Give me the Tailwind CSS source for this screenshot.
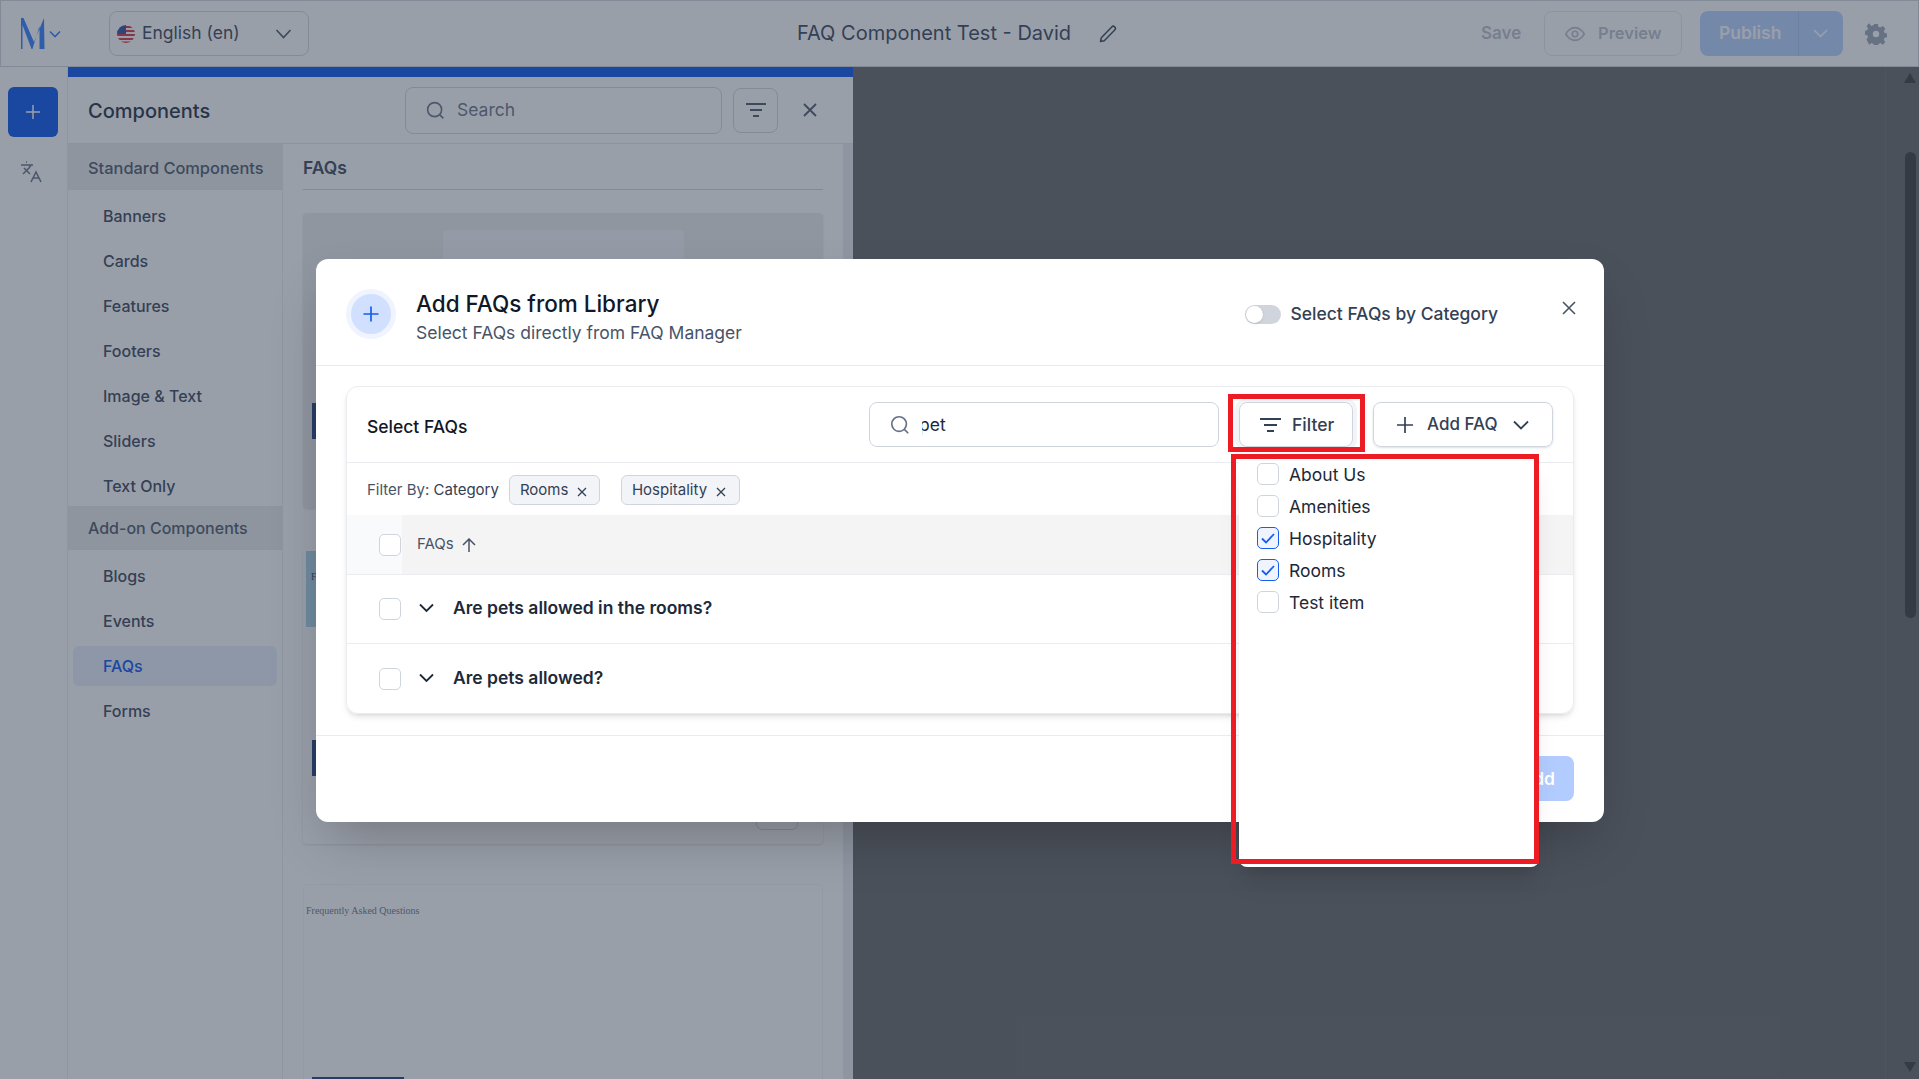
<!DOCTYPE html>
<html lang="en">
<head>
  <meta charset="UTF-8" />
  <title>FAQ Component Test - David</title>
  <script src="https://cdn.jsdelivr.net/npm/@tailwindcss/browser@4"></script>
</head>
<body class="[font-family:Inter,sans-serif]">
<div class="relative w-[1919px] h-[1079px] overflow-hidden bg-white flex flex-col text-[#344054]">

  <!-- top bar -->
  <header class="h-[67px] shrink-0 flex items-center border border-[#d0d5dd] bg-white relative">
    <svg class="ml-[19px] w-[25px] h-[32px] text-[#2a7aff]" viewBox="0 0 25 32" fill="currentColor"><polygon points="1,0 3.5,0 14,24 24,0 24.5,31 19.5,31 19.5,8 12.5,31 11.5,31 2.5,7 2.5,31 1,31"/></svg>
    <svg class="ml-[4px] w-[12px] h-[8px] text-[#2a7aff]" viewBox="0 0 12 8" fill="none" stroke="currentColor" stroke-width="1.6"><path d="m1 1.5 5 5 5-5"/></svg>
    <div class="ml-[48px] w-[200px] h-[45px] rounded-lg border border-[#d0d5dd] flex items-center pl-[7px] pr-[16px]">
      <svg class="w-[18px] h-[18px]" viewBox="0 0 18 18">
        <defs><clipPath id="flagClip"><circle cx="9" cy="9" r="9"/></clipPath></defs>
        <g clip-path="url(#flagClip)">
          <rect width="18" height="18" fill="#fff"/>
          <rect y="1" width="18" height="2" fill="#d92d3a"/><rect y="5" width="18" height="2" fill="#d92d3a"/><rect y="9" width="18" height="2" fill="#d92d3a"/><rect y="13" width="18" height="2" fill="#d92d3a"/><rect y="16.5" width="18" height="2" fill="#d92d3a"/>
          <rect width="9" height="9" fill="#2a4aa0"/>
        </g>
      </svg>
      <span class="ml-[7px] text-[17.5px]">English (en)</span>
      <svg class="ml-auto w-[17px] h-[10px] text-[#475467]" viewBox="0 0 17 10" fill="none" stroke="currentColor" stroke-width="1.7"><path d="m1.5 1 7 7.5 7-7.5"/></svg>
    </div>
    <div class="ml-[488px] flex items-center text-[20px] text-[#344054]">
      <span class="w-[277px] -mt-[1px] whitespace-nowrap">FAQ Component Test - David</span>
      <svg class="ml-[24px] w-[20px] h-[20px]" viewBox="0 0 24 24" fill="none" stroke="currentColor" stroke-width="1.8" stroke-linejoin="round"><path d="M16.5 3.5a2.5 2.5 0 0 1 3.6 3.6L7.5 20 3 21l1-4.5z"/></svg>
    </div>
    <span class="ml-[363px] text-[17px] font-semibold text-[#98a2b3]/70 w-[41px]">Save</span>
    <div class="ml-[22px] w-[138px] h-[45px] rounded-lg border border-[#e4e7ec] flex items-center pl-[19px] text-[#98a2b3]/70 text-[16.5px] font-semibold">
      <svg class="w-[22px] h-[22px]" viewBox="0 0 24 24" fill="none" stroke="currentColor" stroke-width="1.8"><path d="M2 12s3.6-7 10-7 10 7 10 7-3.6 7-10 7-10-7-10-7z"/><circle cx="12" cy="12" r="3"/></svg>
      <span class="ml-[12px]">Preview</span>
    </div>
    <div class="ml-[18px] w-[143px] h-[45px] rounded-lg bg-[#b4d0ff] flex items-center text-white text-[17.5px] font-semibold">
      <span class="w-[99px] h-full flex items-center pl-[19px] border-r border-[#a5c2f5]">Publish</span>
      <svg class="ml-[14px] w-[15px] h-[9px]" viewBox="0 0 15 9" fill="none" stroke="currentColor" stroke-width="1.7"><path d="m1 1 6.5 6.5L14 1"/></svg>
    </div>
    <svg class="ml-[22px] w-[22px] h-[22px] text-[#98a2b3]" viewBox="0 0 24 24" fill="currentColor"><path fill-rule="evenodd" d="M10 1h4l.6 3 2.2.9 2.6-1.7 2.8 2.8-1.7 2.6.9 2.2 3 .6v4l-3 .6-.9 2.2 1.7 2.6-2.8 2.8-2.6-1.7-2.2.9-.6 3h-4l-.6-3-2.2-.9-2.6 1.7L1.6 18l1.7-2.6-.9-2.2-3-.6v-4l3-.6.9-2.2L1.6 3.2 4.4.4 7 3.3l2.2-.9zM12 8.5a3.5 3.5 0 1 0 0 7 3.5 3.5 0 0 0 0-7z"/></svg>
  </header>

  <div class="flex-1 flex min-h-0">
    <!-- icon rail -->
    <nav class="w-[68px] shrink-0 bg-white border-r border-[#eaecf0] flex flex-col items-start pl-[8px] pt-[20px]">
      <div class="w-[50px] h-[50px] rounded-md bg-[#004eec] flex items-center justify-center text-white">
        <svg class="w-[18px] h-[18px]" viewBox="0 0 18 18" fill="none" stroke="currentColor" stroke-width="1.5"><path d="M9 2v14M2 9h14"/></svg>
      </div>
      <svg class="ml-[11px] mt-[23px] w-[24px] h-[24px] text-[#667085]" viewBox="0 0 24 24" fill="none" stroke="currentColor" stroke-width="1.6"><path d="m5 8 6 6M4 14l6-6 2-3M2 5h12M7 2h1M22 22l-5-10-5 10M14 18h6"/></svg>
    </nav>

    <!-- components panel -->
    <aside class="w-[785px] shrink-0 flex flex-col min-h-0">
      <div class="h-[10px] shrink-0 bg-[#004eec]"></div>
      <div class="h-[67px] shrink-0 flex items-center pl-[20px] border-b border-[#e4e7ec]">
        <span class="w-[317px] pt-[2px] text-xl font-medium text-[#1d2939]">Components</span>
        <div class="w-[317px] h-[47px] rounded-lg border border-[#d0d5dd] flex items-center pl-[19px] text-[17.5px] text-[#667085]">
          <svg class="w-[21px] h-[21px]" viewBox="0 0 24 24" fill="none" stroke="currentColor" stroke-width="1.8"><circle cx="11" cy="11" r="8"/><path d="m21 21-4.3-4.3"/></svg>
          <span class="ml-[11px] pt-[1px]">Search</span>
        </div>
        <div class="ml-[11px] w-[45px] h-[45px] rounded-lg border border-[#d0d5dd] flex items-center justify-center text-[#475467]">
          <svg class="w-[22px] h-[16px]" viewBox="0 0 22 16" fill="none" stroke="currentColor" stroke-width="2"><path d="M1 2h20M5 8h12M8 14h6"/></svg>
        </div>
        <svg class="ml-[24px] w-[16px] h-[16px] text-[#475467]" viewBox="0 0 16 16" fill="none" stroke="currentColor" stroke-width="1.8"><path d="m2 2 12 12M14 2 2 14"/></svg>
      </div>
      <div class="flex-1 flex min-h-0">
        <div class="w-[215px] shrink-0 border-r border-[#eaecf0] text-base font-medium">
          <div class="h-[46px] bg-[#eaeaea] flex items-center pl-[20px] pt-[2px] text-[16.4px] text-[#475467] whitespace-nowrap">Standard Components</div>
          <ul class="pt-[6px] space-y-[5px] text-[#344054]">
            <li class="mx-[5px] h-[40px] flex items-center pl-[30px]">Banners</li>
            <li class="mx-[5px] h-[40px] flex items-center pl-[30px]">Cards</li>
            <li class="mx-[5px] h-[40px] flex items-center pl-[30px]">Features</li>
            <li class="mx-[5px] h-[40px] flex items-center pl-[30px]">Footers</li>
            <li class="mx-[5px] h-[40px] flex items-center pl-[30px]">Image &amp; Text</li>
            <li class="mx-[5px] h-[40px] flex items-center pl-[30px]">Sliders</li>
            <li class="mx-[5px] h-[40px] flex items-center pl-[30px]">Text Only</li>
          </ul>
          <div class="h-[44px] bg-[#eaeaea] flex items-center pl-[20px] text-[#475467]">Add-on Components</div>
          <ul class="pt-[6px] space-y-[5px] text-[#344054]">
            <li class="mx-[5px] h-[40px] flex items-center pl-[30px]">Blogs</li>
            <li class="mx-[5px] h-[40px] flex items-center pl-[30px]">Events</li>
            <li class="mx-[5px] h-[40px] flex items-center pl-[30px] rounded-md bg-[#e6eefc] text-[#004eec]">FAQs</li>
            <li class="mx-[5px] h-[40px] flex items-center pl-[30px]">Forms</li>
          </ul>
        </div>
        <div class="flex-1 flex min-w-0 overflow-hidden">
          <div class="w-[560px] pl-[20px] pr-[20px]">
            <div class="h-[46px] flex items-center pt-[3px] border-b border-[#d0d5dd] text-[17.5px] font-semibold text-[#344054]">FAQs</div>
            <div class="mt-[23px] h-[295px] rounded bg-[#ededed] shadow-sm overflow-hidden relative">
              <div class="mx-auto mt-[17px] w-[241px] h-[150px] rounded bg-[#f6f6f8] pt-[24px] text-center text-[11px] [font-family:'Liberation_Serif',serif]">Frequently Asked Questions</div>
              <div class="absolute left-[9px] top-[190px] w-[92px] h-[36px] bg-[#1d3a78]"></div>
            </div>
            <div class="mt-[40px] h-[296px] rounded bg-white shadow-sm overflow-hidden relative">
              <div class="ml-[3px] mt-[3px] h-[76px] bg-[#aad4ea] pt-[18px] pl-[5px] text-[10px] [font-family:'Liberation_Serif',serif]">Frequently Asked Questions</div>
              <div class="absolute left-[9px] top-[192px] w-[92px] h-[36px] bg-[#1d3a78]"></div>
              <div class="absolute left-[453px] top-[240px] w-[42px] h-[42px] rounded-md border border-[#d0d5dd]"></div>
            </div>
            <div class="mt-[40px] h-[296px] rounded border border-[#f2f4f7] relative">
              <div class="pl-[2px] pt-[18px] text-[10px] [font-family:'Liberation_Serif',serif] text-[#667085]">Frequently Asked Questions</div>
              <div class="absolute left-[8px] top-[192px] w-[92px] h-[36px] bg-[#1d3a78]"></div>
            </div>
          </div>
          <div class="w-[10px] bg-[#eaecf0]"></div>
        </div>
      </div>
    </aside>

    <!-- page canvas -->
    <main class="flex-1 bg-[#636363] flex justify-end">
      <div class="w-[34px] border-l border-[#6b6b6b] flex flex-col items-end pr-[3px] pt-[6px] pb-[7px]">
        <svg class="w-[12px] h-[10px] text-[#363636]" viewBox="0 0 12 10" fill="currentColor"><path d="M6 0 12 10H0z"/></svg>
        <div class="mt-[69px] w-[11px] h-[466px] rounded-full bg-[#363636]"></div>
        <svg class="mt-auto w-[12px] h-[10px] text-[#363636]" viewBox="0 0 12 10" fill="currentColor"><path d="M0 0h12L6 10z"/></svg>
      </div>
    </main>
  </div>

  <!-- backdrop -->
  <div class="absolute inset-0 bg-[#344054]/50"></div>

  <!-- modal -->
  <section class="absolute left-[316px] top-[259px] w-[1288px] h-[563px] rounded-xl bg-white shadow-2xl flex flex-col">
    <div class="h-[107px] shrink-0 border-b border-[#eaecf0] flex items-center pt-[4px] pl-[30px] pr-[28px]">
      <div class="w-[50px] h-[50px] rounded-full border-[5px] border-[#eff4ff] bg-[#d1e0ff] flex items-center justify-center text-[#155eef]">
        <svg class="w-[18px] h-[18px]" viewBox="0 0 18 18" fill="none" stroke="currentColor" stroke-width="1.7"><path d="M9 1.5v15M1.5 9h15"/></svg>
      </div>
      <div class="ml-[20px] pt-[6px]">
        <h2 class="text-[22.5px] leading-[30px] font-medium text-[#101828]">Add FAQs from Library</h2>
        <p class="text-[17.5px] leading-[26px] text-[#475467] mt-[1px]">Select FAQs directly from FAQ Manager</p>
      </div>
      <div class="ml-auto flex items-center pt-[1px]">
        <div class="w-[36px] h-[19px] rounded-full bg-[#d0d5dd] flex items-center pl-[1px]"><div class="w-[17px] h-[17px] rounded-full bg-white shadow"></div></div>
        <span class="ml-[9px] text-[17.5px] font-medium text-[#344054] whitespace-nowrap">Select FAQs by Category</span>
        <svg class="ml-[64px] -mt-[14px] w-[14px] h-[14px] text-[#475467]" viewBox="0 0 14 14" fill="none" stroke="currentColor" stroke-width="1.6"><path d="m1 1 12 12M13 1 1 13"/></svg>
      </div>
    </div>

    <div class="mt-[20px] mx-[30px] h-[328px] shrink-0 rounded-xl border border-[#eaecf0] shadow-md flex flex-col overflow-hidden">
      <div class="h-[76px] shrink-0 border-b border-[#eaecf0] flex items-center pl-[20px] pr-[20px]">
        <span class="pt-[6px] text-[17.5px] font-medium text-[#101828]">Select FAQs</span>
        <div class="ml-auto w-[350px] h-[45px] rounded-lg border border-[#d0d5dd] flex items-center pl-[19px] text-[17.5px] text-[#1d2939]">
          <svg class="w-[22px] h-[22px] text-[#667085]" viewBox="0 0 24 24" fill="none" stroke="currentColor" stroke-width="1.8"><circle cx="11" cy="11" r="8"/><path d="m21 21-4.3-4.3"/></svg>
          <span class="ml-[11px] mt-[1px] overflow-hidden"><span class="block -ml-[3px]">pet</span></span>
        </div>
        <div class="ml-[20px] w-[114px] h-[45px] rounded-lg border border-[#d0d5dd] ring-4 ring-[#f2f4f7] shadow-sm flex items-center pl-[20px] text-[17.5px] text-[#344054] font-medium">
          <svg class="w-[21px] h-[16px]" viewBox="0 0 21 16" fill="none" stroke="currentColor" stroke-width="1.8"><path d="M0 2h21M4 8h13M7 14h7"/></svg>
          <span class="ml-[11px] mt-[1px]">Filter</span>
        </div>
        <div class="ml-[20px] w-[180px] h-[45px] rounded-lg border border-[#d0d5dd] shadow-sm flex items-center pl-[22px] text-[17px] text-[#344054] font-medium">
          <svg class="w-[18px] h-[18px]" viewBox="0 0 18 18" fill="none" stroke="currentColor" stroke-width="1.7"><path d="M9 1v16M1 9h16"/></svg>
          <span class="ml-[13px] mt-[1px]">Add FAQ</span>
          <svg class="ml-[16px] w-[16px] h-[10px]" viewBox="0 0 16 10" fill="none" stroke="currentColor" stroke-width="1.8"><path d="m1 1.5 7 7 7-7"/></svg>
        </div>
      </div>
      <div class="h-[52px] shrink-0 flex items-center pt-[2px] pl-[20px] text-[15px]">
        <span class="text-[#475467]">Filter By:&nbsp;</span><span class="text-[#344054]">Category</span>
        <div class="ml-[10px] w-[91px] h-[30px] rounded-md border border-[#d0d5dd] bg-[#f2f4f7] flex items-center pl-[10px] text-[#344054]">Rooms
          <svg class="ml-[9px] mt-[3px] w-[10px] h-[10px]" viewBox="0 0 10 10" fill="none" stroke="currentColor" stroke-width="1.3"><path d="m1 1 8 8M9 1 1 9"/></svg>
        </div>
        <div class="ml-[21px] w-[119px] h-[30px] rounded-md border border-[#d0d5dd] bg-[#f2f4f7] flex items-center pl-[10px] text-[#344054]">Hospitality
          <svg class="ml-[9px] mt-[3px] w-[10px] h-[10px]" viewBox="0 0 10 10" fill="none" stroke="currentColor" stroke-width="1.3"><path d="m1 1 8 8M9 1 1 9"/></svg>
        </div>
      </div>
      <div class="h-[60px] shrink-0 flex border-b border-[#eaecf0] bg-[#f4f4f5]">
        <div class="w-[55px] bg-[#f9fafb] flex items-center pl-[32px]">
          <div class="w-[22px] h-[22px] rounded-[5px] border border-[#d0d5dd] bg-white"></div>
        </div>
        <div class="ml-[15px] flex items-start pt-[18px] text-[15px] text-[#475467]">
          FAQs
          <svg class="ml-[8px] mt-[5px] w-[14px] h-[14px]" viewBox="0 0 14 14" fill="none" stroke="currentColor" stroke-width="1.5"><path d="M7 14V1M1 7l6-6 6 6"/></svg>
        </div>
      </div>
      <div class="h-[69px] shrink-0 flex items-center border-b border-[#eaecf0] pl-[32px]">
        <div class="w-[22px] h-[22px] rounded-[5px] border border-[#d0d5dd]"></div>
        <svg class="ml-[18px] -mt-[2px] w-[15px] h-[10px] text-[#1d2939]" viewBox="0 0 15 10" fill="none" stroke="currentColor" stroke-width="1.8"><path d="m1 1.5 6.5 6.5L14 1.5"/></svg>
        <span class="ml-[19px] -mt-[1px] text-[17.5px] font-semibold text-[#1d2939]">Are pets allowed in the rooms?</span>
      </div>
      <div class="flex-1 flex items-center pl-[32px]">
        <div class="w-[22px] h-[22px] rounded-[5px] border border-[#d0d5dd]"></div>
        <svg class="ml-[18px] -mt-[2px] w-[15px] h-[10px] text-[#1d2939]" viewBox="0 0 15 10" fill="none" stroke="currentColor" stroke-width="1.8"><path d="m1 1.5 6.5 6.5L14 1.5"/></svg>
        <span class="ml-[19px] text-[17.5px] font-semibold text-[#1d2939]">Are pets allowed?</span>
      </div>
    </div>

    <div class="mt-[21px] flex-1 border-t border-[#eaecf0] pt-[20px] pr-[30px] flex justify-end items-start">
      <div class="h-[45px] rounded-lg bg-[#b2ccff] flex items-center px-[19px] pt-[1px] text-[17.5px] text-white font-semibold">Add</div>
    </div>

    <!-- category dropdown -->
    <div class="absolute left-[923px] top-[195px] w-[300px] h-[413px] rounded-b-lg bg-white shadow-xl pt-[9px] pl-[18px] text-[17.5px] text-[#1d2939] space-y-[10px]">
      <label class="flex items-center h-[22px]"><span class="w-[22px] h-[22px] rounded-[5px] border border-[#d0d5dd]"></span><span class="ml-[10px] pt-[3px]">About Us</span></label>
      <label class="flex items-center h-[22px]"><span class="w-[22px] h-[22px] rounded-[5px] border border-[#d0d5dd]"></span><span class="ml-[10px] pt-[3px]">Amenities</span></label>
      <label class="flex items-center h-[22px]"><span class="w-[22px] h-[22px] rounded-[5px] border border-[#155eef] bg-[#eff4ff] flex items-center justify-center text-[#155eef]"><svg class="w-[14px] h-[11px]" viewBox="0 0 14 11" fill="none" stroke="currentColor" stroke-width="1.8"><path d="m1 5.5 4 4L13 1"/></svg></span><span class="ml-[10px] pt-[2px]">Hospitality</span></label>
      <label class="flex items-center h-[22px]"><span class="w-[22px] h-[22px] rounded-[5px] border border-[#155eef] bg-[#eff4ff] flex items-center justify-center text-[#155eef]"><svg class="w-[14px] h-[11px]" viewBox="0 0 14 11" fill="none" stroke="currentColor" stroke-width="1.8"><path d="m1 5.5 4 4L13 1"/></svg></span><span class="ml-[10px] pt-[2px]">Rooms</span></label>
      <label class="flex items-center h-[22px]"><span class="w-[22px] h-[22px] rounded-[5px] border border-[#d0d5dd]"></span><span class="ml-[10px] pt-[2px]">Test item</span></label>
    </div>
  </section>

  <!-- annotation boxes -->
  <div class="absolute left-[1228px] top-[394px] w-[137px] h-[58px] border-[5px] border-[#ed1c24]"></div>
  <div class="absolute left-[1231px] top-[454px] w-[308px] h-[410px] border-[5px] border-[#ed1c24]"></div>
</div>
</body>
</html>
